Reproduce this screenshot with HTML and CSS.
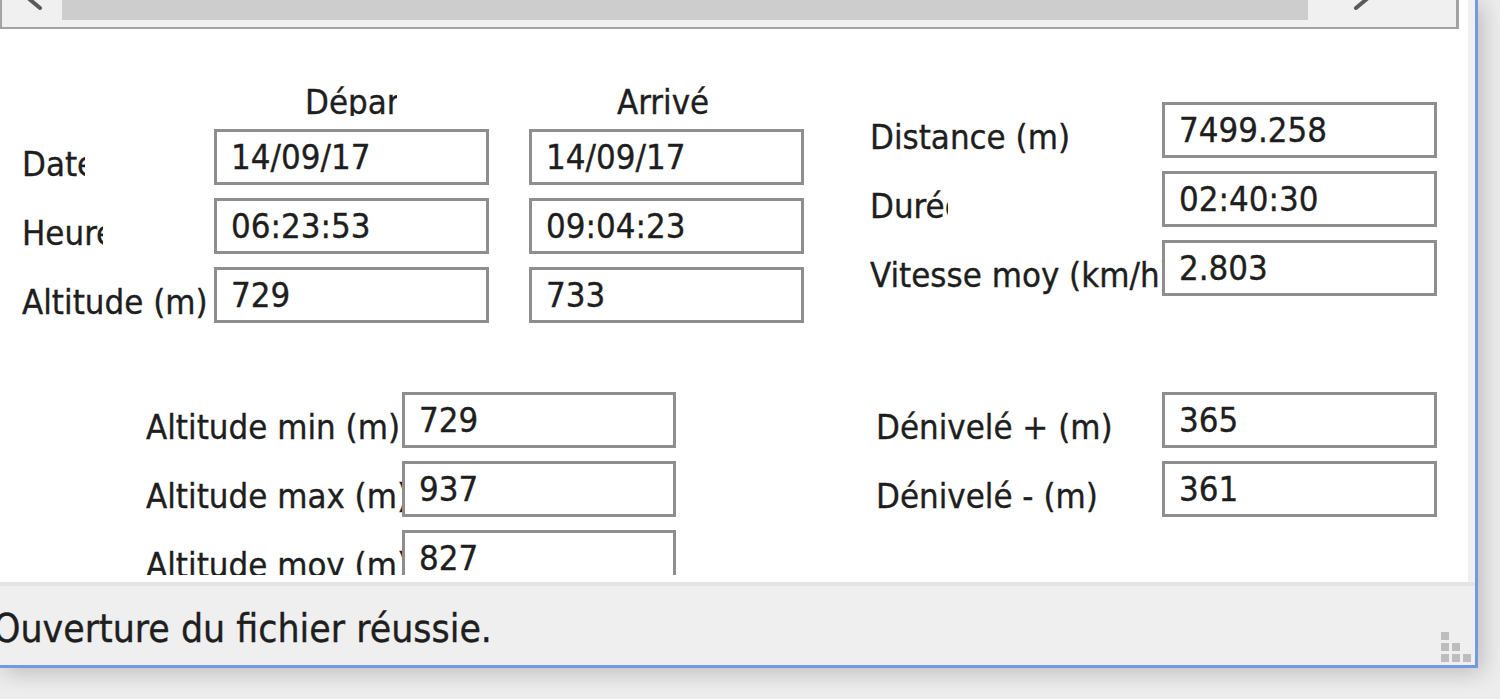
FILE: index.html
```html
<!DOCTYPE html>
<html lang="fr">
<head>
<meta charset="utf-8">
<title>Trace GPS</title>
<link rel="stylesheet" href="styles.css">
</head>
<body>
<div class="window">
  <div class="client">
    <div class="hscroll">
      <div class="sb-btn sb-left">
        <svg class="chev" width="30" height="10" viewBox="0 0 30 10"><line x1="10" y1="-2" x2="22" y2="8" /></svg>
      </div>
      <div class="sb-thumb"></div>
      <div class="sb-btn sb-right">
        <svg class="chev" width="30" height="10" viewBox="0 0 30 10"><line x1="20" y1="-2" x2="8" y2="8" /></svg>
      </div>
    </div>

    <div class="form">
      <div class="top">
        <div class="grid grid-times">
          <div class="hdr-empty"></div>
          <div class="hdr"><span class="hdr-label hdr-dep">Départ</span></div>
          <div class="hdr col3"><span class="hdr-label hdr-arr">Arrivée</span></div>

          <div class="lbl"><span class="clip w-date">Date</span></div>
          <div class="box">14/09/17</div>
          <div class="box col3">14/09/17</div>

          <div class="lbl"><span class="clip w-heure">Heure</span></div>
          <div class="box">06:23:53</div>
          <div class="box col3">09:04:23</div>

          <div class="lbl"><span class="clip">Altitude (m)</span></div>
          <div class="box">729</div>
          <div class="box col3">733</div>
        </div>

        <div class="grid grid-dist">
          <div class="lbl"><span class="clip">Distance (m)</span></div>
          <div class="box">7499.258</div>

          <div class="lbl"><span class="clip w-duree">Durée</span></div>
          <div class="box">02:40:30</div>

          <div class="lbl"><span class="clip">Vitesse moy (km/h)</span></div>
          <div class="box">2.803</div>
        </div>
      </div>

      <div class="bottom">
        <div class="grid grid-alt">
          <div class="lbl"><span class="clip">Altitude min (m)</span></div>
          <div class="box">729</div>

          <div class="lbl"><span class="clip">Altitude max (m)</span></div>
          <div class="box">937</div>

          <div class="lbl"><span class="clip">Altitude moy (m)</span></div>
          <div class="box">827</div>
        </div>

        <div class="grid grid-deniv">
          <div class="lbl"><span class="clip">Dénivelé + (m)</span></div>
          <div class="box">365</div>

          <div class="lbl"><span class="clip">Dénivelé - (m)</span></div>
          <div class="box">361</div>
        </div>
      </div>
    </div>
  </div>

  <div class="status">
    <span class="status-text">Ouverture du fichier réussie.</span>
    <div class="grip">
      <i></i><i class="off"></i><i class="off"></i>
      <i></i><i></i><i class="off"></i>
      <i></i><i></i><i></i>
    </div>
  </div>
</div>
</body>
</html>
```

FILE: styles.css
```css
html, body {
  margin: 0;
  padding: 0;
}

body {
  width: 1500px;
  height: 699px;
  overflow: hidden;
  background: #ededed;
  font-family: "DejaVu Sans Condensed", "DejaVu Sans", sans-serif;
  font-stretch: condensed;
  color: #1e1e1e;
  -webkit-text-stroke: 0.35px #1e1e1e;
}

.window {
  width: 1475px;
  height: 665px;
  background: #f0f0f0;
  border-right: 3px solid #7499dc;
  border-bottom: 3px solid #7499dc;
  box-shadow: 4px 4px 22px rgba(0, 0, 0, 0.22);
  display: flex;
  flex-direction: column;
}

/* white client panel */
.client {
  width: 1468px;
  height: 582px;
  background: #ffffff;
  flex: none;
}

/* horizontal scrollbar at the top */
.hscroll {
  width: 1454px;
  height: 27px;
  border-left: 2px solid #a3a3a3;
  border-right: 3px solid #a3a3a3;
  border-bottom: 2px solid #a3a3a3;
  background: #f0f0f0;
  display: flex;
  align-items: flex-start;
}

.sb-btn {
  height: 27px;
  background: #f0f0f0;
  flex: none;
}

.sb-left {
  width: 60px;
  padding-left: 16px;
  box-sizing: border-box;
}

.sb-right {
  width: 148px;
  padding-left: 40px;
  box-sizing: border-box;
}

.chev {
  display: block;
}

.chev line {
  stroke: #5a5a5a;
  stroke-width: 4;
  stroke-linecap: round;
}

.sb-thumb {
  flex: 1;
  height: 20px;
  background: #cdcdcd;
}

/* form area */
.form {
  height: 546px;
  overflow: hidden;
  font-size: 34.5px;
}

.top {
  display: flex;
  align-items: flex-start;
  padding-left: 22px;
}

.grid {
  display: grid;
  grid-auto-rows: 56px;
  row-gap: 13px;
}

.grid-times {
  grid-template-columns: 192px 275px 315px;
  grid-template-rows: 34px;
  margin-top: 53px;
  row-gap: 13px;
}

.grid-times > div:first-child,
.grid-times .hdr {
  margin-bottom: -13px;
}

.col3 {
  margin-left: 40px;
}

.grid-dist {
  grid-template-columns: 292px 275px;
  margin-top: 73px;
  margin-left: 66px;
}

.hdr-label {
  display: block;
  height: 34px;
  line-height: 40px;
  overflow: hidden;
  white-space: nowrap;
  width: 92px;
}

.hdr-dep {
  margin-left: 91px;
}

.hdr-arr {
  margin-left: 88px;
}

.lbl {
  overflow: hidden;
  min-width: 0;
}

.clip {
  display: block;
  padding-top: 15px;
  line-height: 40px;
  white-space: nowrap;
  overflow: hidden;
}

.w-date {
  width: 63px;
}

.w-heure {
  width: 81px;
}

.w-duree {
  width: 78px;
}

.box {
  border: 3px solid #8e8e8e;
  background: #ffffff;
  padding-left: 14px;
  display: flex;
  align-items: center;
  line-height: 40px;
  white-space: nowrap;
  min-width: 0;
}

.bottom {
  display: flex;
  align-items: flex-start;
  margin-top: 69px;
}

.grid-alt {
  grid-template-columns: 256px 274px;
  margin-left: 146px;
}

.grid-deniv {
  grid-template-columns: 286px 275px;
  margin-left: 200px;
}

/* status bar */
.status {
  flex: 1;
  border-top: 4px solid #e4e4e4;
  background: #efefef;
  display: flex;
  align-items: center;
  position: relative;
}

.status-text {
  font-size: 38.8px;
  line-height: 44px;
  margin-left: -7px;
  white-space: nowrap;
  margin-top: 6px;
}

.grip {
  position: absolute;
  right: 4px;
  bottom: 3px;
  display: grid;
  grid-template-columns: repeat(3, 8px);
  grid-auto-rows: 8px;
  gap: 3px;
  -webkit-text-stroke: 0;
}

.grip i {
  display: block;
  background: #bdbdbd;
}

.grip i.off {
  background: transparent;
}
```
